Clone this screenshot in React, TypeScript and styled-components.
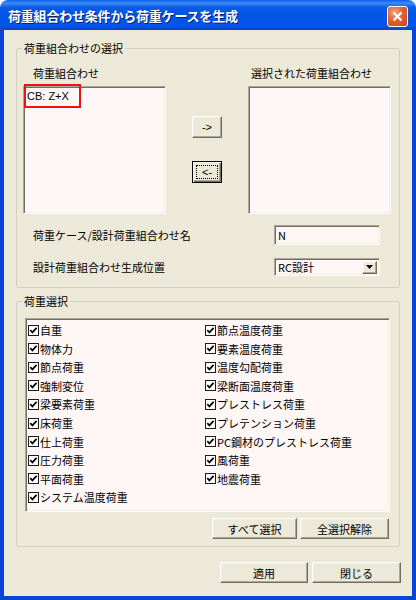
import React from "react";
import styled, { createGlobalStyle } from "styled-components";

const GlobalStyle = createGlobalStyle`
  html, body {
    margin: 0;
    padding: 0;
    background: #ffffff;
  }
  body {
    font-family: "Noto Sans CJK JP", "Liberation Sans", sans-serif;
    font-size: 11px;
    color: #000;
  }
`;

const loads = [
  "自重",
  "物体力",
  "節点荷重",
  "強制変位",
  "梁要素荷重",
  "床荷重",
  "仕上荷重",
  "圧力荷重",
  "平面荷重",
  "システム温度荷重",
  "節点温度荷重",
  "要素温度荷重",
  "温度勾配荷重",
  "梁断面温度荷重",
  "プレストレス荷重",
  "プレテンション荷重",
  "PC鋼材のプレストレス荷重",
  "風荷重",
  "地震荷重",
];

const CheckIcon = () => (
  <svg width="11" height="11" viewBox="0 0 11 11">
    <rect x="0.5" y="0.5" width="10" height="10" fill="#fff" stroke="#1c1c1c" />
    <path d="M2.3 5.2 L4.4 7.4 L8.6 2.9" fill="none" stroke="#000" strokeWidth="1.7" />
  </svg>
);

const App = () => {
  return (
    <>
      <GlobalStyle />
      <Window>
        <TitleBar>
          <Title>荷重組合わせ条件から荷重ケースを生成</Title>
          <CloseButton>
            <svg width="11" height="11" viewBox="0 0 11 11">
              <path d="M1.5 1.5 L9.5 9.5 M9.5 1.5 L1.5 9.5" stroke="#fff" strokeWidth="2.2" />
            </svg>
          </CloseButton>
        </TitleBar>
        <Body>
          <Group>
            <Legend>荷重組合わせの選択</Legend>
            <PickGrid>
              <ColLabel $indent={10}>荷重組合わせ</ColLabel>
              <span />
              <ColLabel $indent={3}>選択された荷重組合わせ</ColLabel>
              <ListBox>
                <ListItem>CB: Z+X</ListItem>
                <Highlight />
              </ListBox>
              <MoveButtons>
                <SmallButton>-&gt;</SmallButton>
                <SmallButton $focused>
                  <FocusRing>&lt;-</FocusRing>
                </SmallButton>
              </MoveButtons>
              <ListBox />
            </PickGrid>
            <FormRows>
              <FormRow>
                <FieldLabel>荷重ケース/設計荷重組合わせ名</FieldLabel>
                <TextBox $h={20}>N</TextBox>
              </FormRow>
              <FormRow>
                <FieldLabel>設計荷重組合わせ生成位置</FieldLabel>
                <TextBox $h={18}>
                  RC設計
                  <DropButton>
                    <svg width="7" height="4" viewBox="0 0 7 4">
                      <path d="M0 0 H7 L3.5 4 Z" fill="#000" />
                    </svg>
                  </DropButton>
                </TextBox>
              </FormRow>
            </FormRows>
          </Group>
          <Group $second>
            <Legend>荷重選択</Legend>
            <CheckPanel>
              {loads.map((label) => (
                <CheckRow key={label}>
                  <CheckIcon />
                  <span>{label}</span>
                </CheckRow>
              ))}
            </CheckPanel>
            <ButtonRow $pad={2}>
              <PushButton $w={85}>すべて選択</PushButton>
              <PushButton $w={89}>全選択解除</PushButton>
            </ButtonRow>
          </Group>
          <Footer>
            <PushButton $w={88}>適用</PushButton>
            <PushButton $w={89}>閉じる</PushButton>
          </Footer>
        </Body>
      </Window>
    </>
  );
};

export default App;

const Window = styled.div`
  width: 416px;
  height: 600px;
  display: flex;
  flex-direction: column;
`;

const TitleBar = styled.div`
  height: 30px;
  flex-shrink: 0;
  display: flex;
  align-items: center;
  justify-content: space-between;
  padding: 0 8px 0 8px;
  box-sizing: border-box;
  border-radius: 8px 8px 0 0;
  background: linear-gradient(
    180deg,
    #0a5fe8 0%,
    #3b8cf6 10%,
    #0a5ae6 25%,
    #0054e3 55%,
    #0057ea 85%,
    #0046c6 100%
  );
`;

const Title = styled.div`
  color: #fff;
  font-size: 13px;
  font-weight: 700;
  letter-spacing: -0.2px;
  text-shadow: 1px 1px #0a1e78;
`;

const CloseButton = styled.div`
  width: 21px;
  height: 21px;
  box-sizing: border-box;
  border: 1px solid #fff;
  border-radius: 3px;
  display: flex;
  align-items: center;
  justify-content: center;
  background: radial-gradient(circle at 35% 30%, #f2a587 0%, #e3602f 45%, #c9401a 100%);
  margin-top: 2px;
`;

const Body = styled.div`
  flex: 1;
  display: flex;
  flex-direction: column;
  background: #ece9d8;
  border: 4px solid #0a44d6;
  border-top: 0;
  border-bottom-width: 4px;
  padding: 11px 11px 0 11px;
  box-sizing: border-box;
`;

const Group = styled.fieldset<{ $second?: boolean }>`
  margin: ${({ $second }) => ($second ? "6px 0 0 1px" : "0 0 0 1px")};
  width: 384px;
  box-sizing: border-box;
  padding: 0;
  border: 1px solid #d0d0bf;
  border-radius: 3px;
  display: flex;
  flex-direction: column;
  min-width: 0;
`;

const Legend = styled.legend`
  font-size: 11px;
  line-height: 14px;
  padding: 0 2px;
  margin-left: 5px;
  color: #000;
`;

const PickGrid = styled.div`
  display: grid;
  grid-template-columns: 143px 82px 143px;
  grid-template-rows: 14px 128px;
  row-gap: 6px;
  padding: 11px 0 0 6px;
`;

const ColLabel = styled.div<{ $indent: number }>`
  line-height: 14px;
  padding-left: ${({ $indent }) => $indent}px;
  white-space: nowrap;
`;

const sunken = `
  border-style: solid;
  border-width: 1px;
  border-color: #aca899 #ffffff #ffffff #aca899;
  box-shadow: inset 1px 1px #716f64, inset -1px -1px #f1efe2;
  background: #fff6f6;
  box-sizing: border-box;
`;

const ListBox = styled.div`
  ${sunken}
  position: relative;
  padding: 2px 3px;
`;

const ListItem = styled.div`
  font-family: "Liberation Sans", "Noto Sans CJK JP", sans-serif;
  font-size: 11px;
  line-height: 14px;
`;

const Highlight = styled.div`
  position: absolute;
  left: 0;
  top: -3px;
  width: 57px;
  height: 24px;
  border: 2px solid #ee1111;
  box-sizing: border-box;
`;

const MoveButtons = styled.div`
  display: flex;
  flex-direction: column;
  align-items: center;
  gap: 23px;
  padding-top: 30px;
`;

const raised = `
  background: #ece9d8;
  border-style: solid;
  border-width: 1px;
  border-color: #ffffff #716f64 #716f64 #ffffff;
  box-shadow: inset -1px -1px #aca899, inset 1px 1px #f1efe2;
  box-sizing: border-box;
`;

const SmallButton = styled.div<{ $focused?: boolean }>`
  ${raised}
  width: 30px;
  height: 22px;
  display: flex;
  align-items: center;
  justify-content: center;
  font-family: "Liberation Sans", sans-serif;
  font-size: 11px;
  ${({ $focused }) =>
    $focused &&
    `
    border: 1px solid #000;
    box-shadow: inset 1px 1px #fff, inset -1px -1px #716f64, inset -2px -2px #aca899;
  `}
`;

const FocusRing = styled.span`
  display: flex;
  align-items: center;
  justify-content: center;
  width: 22px;
  height: 14px;
  border: 1px dotted #000;
  box-sizing: border-box;
`;

const FormRows = styled.div`
  display: flex;
  flex-direction: column;
  gap: 13px;
  padding: 11px 0 11px 16px;
`;

const FormRow = styled.div`
  display: grid;
  grid-template-columns: 241px 106px;
  align-items: center;
`;

const FieldLabel = styled.div`
  line-height: 14px;
  white-space: nowrap;
`;

const TextBox = styled.div<{ $h: number }>`
  ${sunken}
  height: ${({ $h }) => $h}px;
  display: flex;
  align-items: center;
  justify-content: space-between;
  padding: 0 2px 0 3px;
  font-size: 11px;
  line-height: 14px;
`;

const DropButton = styled.div`
  ${raised}
  width: 15px;
  height: 13px;
  display: flex;
  align-items: center;
  justify-content: center;
`;

const CheckPanel = styled.div`
  ${sunken}
  margin: 10px 0 0 8px;
  width: 365px;
  height: 194px;
  padding: 2px 0 0 2px;
  display: grid;
  grid-template-columns: 177px 1fr;
  grid-template-rows: repeat(10, 18.55px);
  grid-auto-flow: column;
`;

const CheckRow = styled.div`
  display: flex;
  align-items: center;
  gap: 1px;
  white-space: nowrap;
  font-size: 11px;
`;

const ButtonRow = styled.div<{ $pad: number }>`
  display: flex;
  justify-content: flex-end;
  gap: 3px;
  padding: 6px ${({ $pad }) => $pad + 8}px 7px 0;
`;

const PushButton = styled.div<{ $w: number }>`
  ${raised}
  width: ${({ $w }) => $w}px;
  height: 21px;
  display: flex;
  align-items: center;
  justify-content: center;
  font-size: 11px;
`;

const Footer = styled.div`
  display: flex;
  justify-content: flex-end;
  gap: 4px;
  margin-top: 15px;
`;
